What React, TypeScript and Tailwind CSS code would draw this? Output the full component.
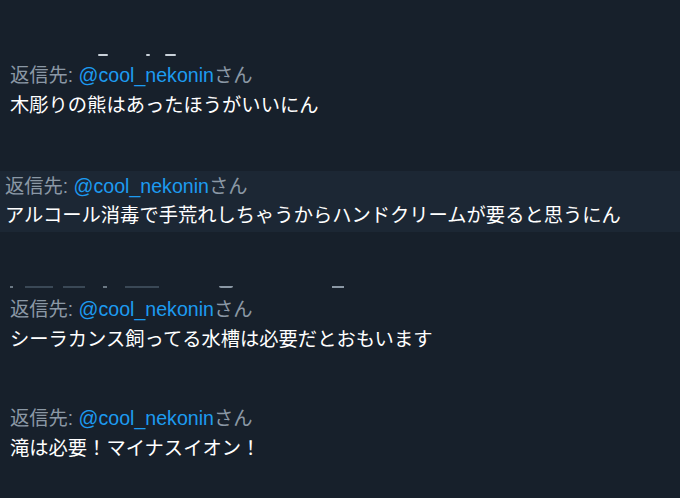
import React from "react";

const font = { fontFamily: '"Liberation Sans", "Noto Sans CJK JP", sans-serif' };

function ReplyTo({ lh = "leading-[30px]" }: { lh?: string }) {
  return (
    <div className={`text-[19.3px] ${lh} text-[#8b98a5] whitespace-nowrap`}>
      返信先: <span className="text-[#1d9bf0] text-[19.6px]">@cool_nekonin</span>さん
    </div>
  );
}

export default function App() {
  return (
    <div className="w-[680px] h-[498px] bg-[#17202b] overflow-hidden flex flex-col" style={font}>
      <div className="mt-[54px] h-[2px] flex">
        <span className="ml-[98px] w-[10px] h-[2px] bg-[#c9d1d9] rounded-full" />
        <span className="ml-[38px] w-[4px] h-[2px] bg-[#c9d1d9] rounded-full" />
        <span className="ml-[15px] w-[11px] h-[2px] bg-[#c9d1d9] rounded-full" />
      </div>
      <div className="mt-[4px] pl-[10px]">
        <ReplyTo />
        <div className="text-[19.3px] leading-[30px] text-[#ffffff] whitespace-nowrap">木彫りの熊はあったほうがいいにん</div>
      </div>
      <div className="mt-[50px] h-[61px] bg-[#1c2734] pl-[5px] pt-[1px]">
        <ReplyTo lh="leading-[29px]" />
        <div className="text-[19.3px] leading-[29px] text-[#ffffff] whitespace-nowrap">アルコール消毒で手荒れしちゃうからハンドクリームが要ると思うにん</div>
      </div>
      <div className="mt-[54px] h-[2px] flex">
        <span className="ml-[10px] w-[3px] h-[2px] bg-[#6b7884]" />
        <span className="ml-[12px] w-[28px] h-[2px] bg-[#3a4856]" />
        <span className="ml-[10px] w-[22px] h-[2px] bg-[#3a4856]" />
        <span className="ml-[18px] w-[4px] h-[2px] bg-[#6b7884]" />
        <span className="ml-[18px] w-[34px] h-[2px] bg-[#3a4856]" />
        <span className="ml-[60px] w-[14px] h-[2px] bg-[#8b98a5] rounded-b-full" />
        <span className="ml-[99px] w-[12px] h-[2px] bg-[#8b98a5]" />
      </div>
      <div className="mt-[6px] pl-[10px]">
        <ReplyTo />
        <div className="text-[19.3px] leading-[30px] text-[#ffffff] whitespace-nowrap">シーラカンス飼ってる水槽は必要だとおもいます</div>
      </div>
      <div className="mt-[48px] pl-[10px]">
        <ReplyTo />
        <div className="text-[19.3px] leading-[30px] text-[#ffffff] whitespace-nowrap">滝は必要！マイナスイオン！</div>
      </div>
    </div>
  );
}
